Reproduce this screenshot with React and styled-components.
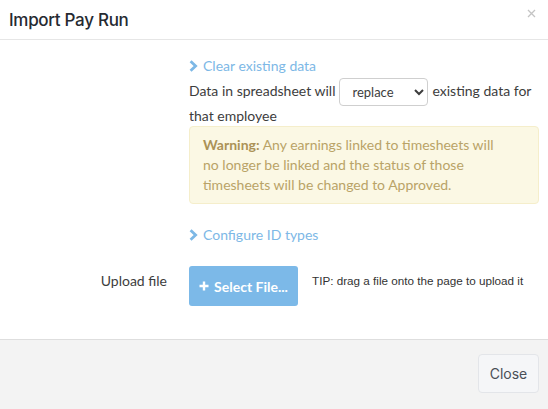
import React from 'react';
import styled, { createGlobalStyle } from 'styled-components';

const GlobalStyle = createGlobalStyle`
    html, body {
        margin: 0;
        padding: 0;
        background: #fff;
    }
`;

const Modal = styled.div`
    width: 548px;
    height: 409px;
    display: flex;
    flex-direction: column;
    background: #fff;
    font-family: Lato, "Open Sans", sans-serif;
    color: #3d3d3d;
`;

const Header = styled.header`
    height: 40px;
    box-sizing: border-box;
    padding: 0 12px 0 9px;
    display: flex;
    align-items: center;
    justify-content: space-between;
    border-bottom: 1px solid #e6e6e6;
`;

const Title = styled.h3`
    margin: 0;
    font-family: Inter, "Noto Sans", sans-serif;
    font-size: 17px;
    font-weight: 500;
    color: #262a31;
    letter-spacing: -0.3px;
`;

const CloseX = styled.button`
    border: none;
    background: none;
    padding: 0;
    margin-top: -12px;
    color: #c4c4c4;
    cursor: pointer;
    display: flex;
`;

const Body = styled.div`
    flex: 1;
    padding: 16px 9px 0 0;
    display: flex;
    flex-direction: column;
`;

const Row = styled.div`
    display: grid;
    grid-template-columns: 189px 1fr;
    margin-top: ${p => p.top || 0}px;
    margin-bottom: ${p => p.gap || 0}px;
`;

const Label = styled.div`
    text-align: right;
    padding-right: 22px;
    padding-top: ${p => p.top || 0}px;
    font-size: 14px;
    line-height: 20px;
`;

const Field = styled.div`
    font-size: 14px;
    line-height: 20px;
`;

const Toggle = styled.a`
    display: inline-flex;
    align-items: center;
    gap: 5px;
    color: #7db8e6;
    cursor: pointer;
    font-size: 14px;
    line-height: 20px;
`;

const Sentence = styled.p`
    margin: 1px 0 0;
    line-height: 20px;
`;

const Select = styled.select`
    width: 89px;
    height: 28px;
    margin: 0 4px 0 4px;
    padding: 0 6px 0 8px;
    border: 1px solid #cfcfcf;
    border-radius: 4px;
    background: #fff;
    font-family: Lato, sans-serif;
    font-size: 13px;
    color: #3d3d3d;
    vertical-align: middle;
`;

const Warning = styled.div`
    padding: 8px 13px;
    background: #fbf8e4;
    border: 1px solid #f5eecb;
    border-radius: 4px;
    color: #b9a367;
    line-height: 20px;

    strong {
        color: #ab9256;
        font-weight: 700;
    }
`;

const WarningText = styled.div`
    max-width: 300px;
`;

const Upload = styled.div`
    display: flex;
    align-items: flex-start;
    gap: 14px;
`;

const SelectFile = styled.button`
    width: 109px;
    height: 40px;
    border: none;
    border-radius: 3px;
    background: #7cb9e8;
    color: #fff;
    font-family: Lato, sans-serif;
    font-size: 14px;
    font-weight: 700;
    display: flex;
    align-items: center;
    justify-content: center;
    gap: 5px;
    cursor: pointer;
`;

const Tip = styled.span`
    font-family: "Liberation Sans", Arial, sans-serif;
    font-size: 11.7px;
    color: #333;
    padding-top: 8px;
`;

const Footer = styled.footer`
    height: 70px;
    box-sizing: border-box;
    border-top: 1px solid #dedede;
    background: #f3f3f3;
    display: flex;
    justify-content: flex-end;
    align-items: flex-start;
    padding: 14px 9px 0 0;
`;

const CloseButton = styled.button`
    width: 61px;
    height: 39px;
    border: 1px solid #e3e5e9;
    border-radius: 4px;
    background: #f5f6f8;
    font-family: Inter, "Noto Sans", sans-serif;
    font-size: 14px;
    color: #4a4f57;
    cursor: pointer;
`;

const Chevron = () => (
    <svg width="9" height="12" viewBox="0 0 9 12">
        <path d="M1.6 1.3 L6.6 6 L1.6 10.7" fill="none" stroke="currentColor" strokeWidth="2.8" />
    </svg>
);

const Plus = () => (
    <svg width="10" height="10" viewBox="0 0 10 10">
        <path d="M5 0.5v9M0.5 5h9" stroke="#fff" strokeWidth="2.4" />
    </svg>
);

function App() {
    return (
        <Modal>
            <GlobalStyle />
            <Header>
                <Title>Import Pay Run</Title>
                <CloseX aria-label="close">
                    <svg width="9" height="9" viewBox="0 0 9 9">
                        <path d="M1 1l7 7M8 1l-7 7" stroke="currentColor" strokeWidth="1.3" />
                    </svg>
                </CloseX>
            </Header>
            <Body>
                <Row>
                    <Label />
                    <Field>
                        <Toggle><Chevron />Clear existing data</Toggle>
                        <Sentence>
                            Data in spreadsheet will
                            <Select defaultValue="replace">
                                <option value="replace">replace</option>
                                <option value="add">add to</option>
                            </Select>
                            existing data for that employee
                        </Sentence>
                        <Warning>
                            <WarningText>
                                <strong>Warning:</strong> Any earnings linked to timesheets will no longer be linked and the status of those timesheets will be changed to Approved.
                            </WarningText>
                        </Warning>
                    </Field>
                </Row>
                <Row top={21} gap={20}>
                    <Label />
                    <Field>
                        <Toggle><Chevron />Configure ID types</Toggle>
                    </Field>
                </Row>
                <Row>
                    <Label top={5}>Upload file</Label>
                    <Upload>
                        <SelectFile><Plus />Select File...</SelectFile>
                        <Tip>TIP: drag a file onto the page to upload it</Tip>
                    </Upload>
                </Row>
            </Body>
            <Footer>
                <CloseButton>Close</CloseButton>
            </Footer>
        </Modal>
    );
}

export default App;
